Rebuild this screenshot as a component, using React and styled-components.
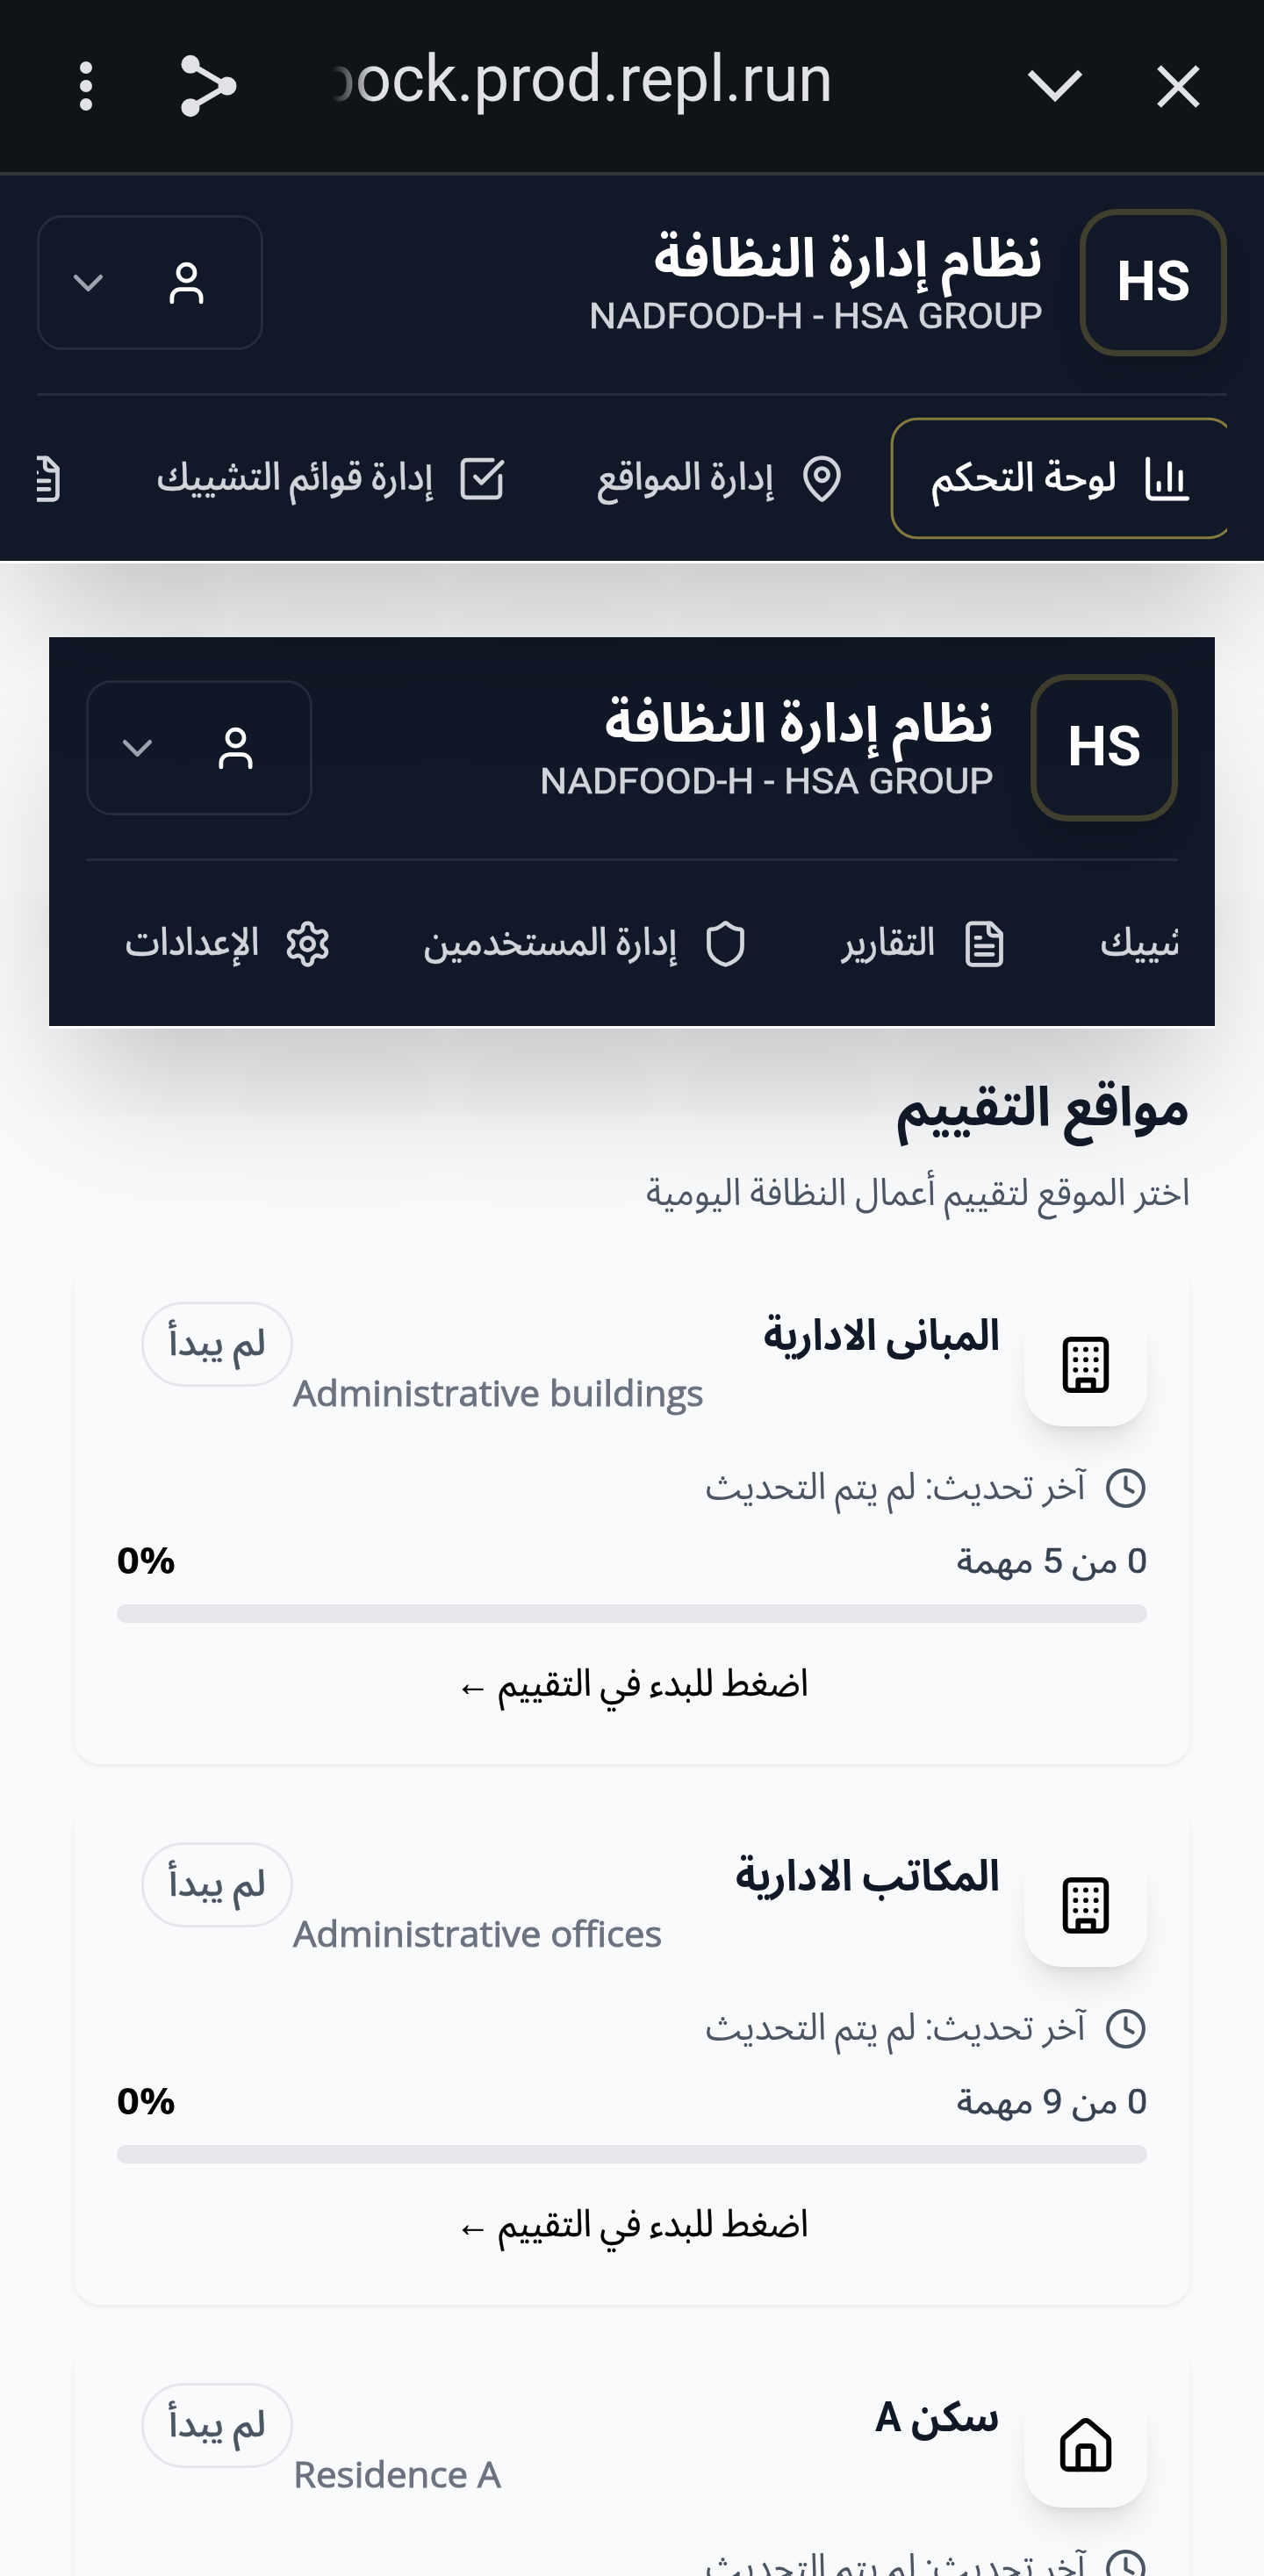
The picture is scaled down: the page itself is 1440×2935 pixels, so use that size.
import React, { useLayoutEffect, useRef, useState } from 'react';
import styled, { createGlobalStyle } from 'styled-components';

const GlobalStyle = createGlobalStyle`
  *, *::before, *::after { box-sizing: border-box; }
  body {
    margin: 0;
    background: #f9fafc;
    font-family: Roboto, "Noto Sans Arabic", "Noto Sans", sans-serif;
  }
  h1, h2, h3, p { margin: 0; }
`;

/* ---------- text that keeps a set measure ---------- */

const FitBox = styled.span`
  display: block;
  flex: none;
  direction: ${(p) => (p.$ltr ? 'ltr' : 'rtl')};
  width: ${(p) => p.$width}px;
  height: ${(p) => p.$line}px;
  line-height: ${(p) => p.$line}px;
  ${(p) => p.$humanist && 'font-family: "Open Sans", "Noto Sans", sans-serif;'}
  font-size: ${(p) => p.$size}px;
  font-weight: ${(p) => p.$weight || 400};
  -webkit-text-stroke: ${(p) => p.$stroke || 0}px currentColor;
  color: ${(p) => p.$color || 'inherit'};
  white-space: nowrap;
`;

const FitInner = styled.span`
  display: inline-block;
  transform-origin: ${(p) => (p.$ltr ? 'left' : 'right')} center;
`;

function Fit({ width, line, size, weight, stroke, color, ltr, humanist, children }) {
  const ref = useRef(null);
  const [scale, setScale] = useState(1);
  useLayoutEffect(() => {
    const natural = ref.current.offsetWidth;
    if (natural) setScale(width / natural);
  }, [width, size, children]);
  return (
    <FitBox
      $width={width}
      $line={line}
      $size={size}
      $weight={weight}
      $stroke={stroke}
      $color={color}
      $ltr={ltr}
      $humanist={humanist}
    >
      <FitInner ref={ref} $ltr={ltr} style={{ transform: `scaleX(${scale})` }}>
        {children}
      </FitInner>
    </FitBox>
  );
}

/* ---------- icons ---------- */

const Svg = styled.svg`
  display: block;
  flex: none;
  fill: none;
  stroke: currentColor;
  stroke-width: 2;
  stroke-linecap: round;
  stroke-linejoin: round;
`;

const icons = {
  chart: ['M3 3v16a2 2 0 0 0 2 2h16', 'M18 17V9', 'M13 17V5', 'M8 17v-3'],
  pin: [
    'M20 10c0 4.993-5.539 10.193-7.399 11.799a1 1 0 0 1-1.202 0C9.539 20.193 4 14.993 4 10a8 8 0 0 1 16 0',
    'M15 10a3 3 0 1 1-6 0a3 3 0 1 1 6 0',
  ],
  check: [
    'M21 10.656V19a2 2 0 0 1-2 2H5a2 2 0 0 1-2-2V5a2 2 0 0 1 2-2h12.344',
    'm9 11 3 3L22 4',
  ],
  file: [
    'M15 2H6a2 2 0 0 0-2 2v16a2 2 0 0 0 2 2h12a2 2 0 0 0 2-2V7Z',
    'M14 2v4a2 2 0 0 0 2 2h4',
    'M10 9H8',
    'M16 13H8',
    'M16 17H8',
  ],
  shield: [
    'M20 13c0 5-3.5 7.5-7.66 8.95a1 1 0 0 1-.67-.01C7.5 20.5 4 18 4 13V6a1 1 0 0 1 1-1c2 0 4.5-1.2 6.24-2.72a1.17 1.17 0 0 1 1.52 0C14.51 3.81 17 5 19 5a1 1 0 0 1 1 1z',
  ],
  settings: [
    'M12.22 2h-.44a2 2 0 0 0-2 2v.18a2 2 0 0 1-1 1.73l-.43.25a2 2 0 0 1-2 0l-.15-.08a2 2 0 0 0-2.73.73l-.22.38a2 2 0 0 0 .73 2.73l.15.1a2 2 0 0 1 1 1.72v.51a2 2 0 0 1-1 1.74l-.15.09a2 2 0 0 0-.73 2.73l.22.38a2 2 0 0 0 2.73.73l.15-.08a2 2 0 0 1 2 0l.43.25a2 2 0 0 1 1 1.73V20a2 2 0 0 0 2 2h.44a2 2 0 0 0 2-2v-.18a2 2 0 0 1 1-1.73l.43-.25a2 2 0 0 1 2 0l.15.08a2 2 0 0 0 2.73-.73l.22-.39a2 2 0 0 0-.73-2.73l-.15-.08a2 2 0 0 1-1-1.74v-.5a2 2 0 0 1 1-1.74l.15-.09a2 2 0 0 0 .73-2.73l-.22-.38a2 2 0 0 0-2.73-.73l-.15.08a2 2 0 0 1-2 0l-.43-.25a2 2 0 0 1-1-1.73V4a2 2 0 0 0-2-2z',
    'M15 12a3 3 0 1 1-6 0a3 3 0 1 1 6 0',
  ],
  user: ['M19 21v-2a4 4 0 0 0-4-4H9a4 4 0 0 0-4 4v2', 'M16 7a4 4 0 1 1-8 0a4 4 0 1 1 8 0'],
  down: ['m6 9 6 6 6-6'],
  clock: ['M22 12a10 10 0 1 1-20 0a10 10 0 1 1 20 0', 'M12 6v6l4 2'],
  building: [
    'M6 2h12a2 2 0 0 1 2 2v16a2 2 0 0 1-2 2H6a2 2 0 0 1-2-2V4a2 2 0 0 1 2-2z',
    'M9 22v-4h6v4',
    'M8 6h.01',
    'M12 6h.01',
    'M16 6h.01',
    'M8 10h.01',
    'M12 10h.01',
    'M16 10h.01',
    'M8 14h.01',
    'M12 14h.01',
    'M16 14h.01',
  ],
  house: [
    'M15 21v-8a1 1 0 0 0-1-1h-4a1 1 0 0 0-1 1v8',
    'M3 10a2 2 0 0 1 .709-1.528l7-5.999a2 2 0 0 1 2.582 0l7 5.999A2 2 0 0 1 21 10v9a2 2 0 0 1-2 2H5a2 2 0 0 1-2-2z',
  ],
};

function Icon({ name, size = 57 }) {
  return (
    <Svg width={size} height={size} viewBox="0 0 24 24">
      {icons[name].map((d) => (
        <path key={d} d={d} />
      ))}
    </Svg>
  );
}

/* ---------- browser bar ---------- */

const BrowserBar = styled.div`
  direction: ltr;
  display: flex;
  align-items: center;
  height: 200px;
  padding: 0 69px 0 88px;
  background: #101318;
  border-bottom: 4px solid #303338;
  color: #e1e2e8;
`;

const BarGlyph = styled.svg`
  display: block;
  flex: none;
  margin-left: ${(p) => p.$gap || 0}px;
  stroke: currentColor;
  fill: none;
`;

const Address = styled.div`
  display: flex;
  justify-content: flex-end;
  width: 571px;
  margin: 0 auto 16px 106px;
  overflow: hidden;
  mask-image: linear-gradient(to right, transparent 0, #000 48px);
`;

function Browser() {
  return (
    <BrowserBar>
      <BarGlyph width="20" height="60" viewBox="0 0 20 60">
        <g fill="currentColor" stroke="none">
          <circle cx="10" cy="9" r="7" />
          <circle cx="10" cy="30" r="7" />
          <circle cx="10" cy="51" r="7" />
        </g>
      </BarGlyph>
      <BarGlyph $gap={96} width="68" height="76" viewBox="0 0 68 76">
        <path d="M13 13.3 55 38 13 62.7" strokeWidth="6.6" />
        <g fill="currentColor" stroke="none">
          <circle cx="13" cy="13.3" r="10.5" />
          <circle cx="55" cy="38" r="10.5" />
          <circle cx="13" cy="62.7" r="10.5" />
        </g>
      </BarGlyph>
      <Address>
        <Fit width={585} line={90} size={74} ltr>
          bock.prod.repl.run
        </Fit>
      </Address>
      <BarGlyph width="68" height="40" viewBox="0 0 68 40">
        <path d="M5.4 4.4 34 33 62.6 4.4" strokeWidth="7.4" />
      </BarGlyph>
      <BarGlyph $gap={78} width="57" height="57" viewBox="0 0 57 57">
        <path d="M6.5 6.5 50.5 50.5M50.5 6.5 6.5 50.5" strokeWidth="6.6" />
      </BarGlyph>
    </BrowserBar>
  );
}

/* ---------- application header ---------- */

const HeaderBox = styled.header`
  position: relative;
  z-index: ${(p) => (p.$inset ? 1 : 2)};
  margin: ${(p) => (p.$inset ? '84px 56px 0' : '0')};
  padding: ${(p) => (p.$inset ? 42 : 38)}px 42px 0;
  background: #111827;
  border-bottom: 3px solid #fff;
  box-shadow: 0 84px 168px -34px rgba(0, 0, 0, 0.25);
`;

const Brand = styled.div`
  display: flex;
  align-items: center;
  height: 213px;
  padding-bottom: 42px;
  border-bottom: 3px solid #232c3b;
`;

const Logo = styled.div`
  display: flex;
  align-items: center;
  justify-content: center;
  width: 168px;
  height: 168px;
  padding-bottom: 3px;
  border: 7px solid #403e2d;
  border-radius: 42px;
  color: #fff;
  box-shadow: 0 26px 39px -8px rgba(0, 0, 0, 0.1), 0 10px 16px -10px rgba(0, 0, 0, 0.1);
`;

const BrandText = styled.div`
  display: flex;
  flex-direction: column;
  gap: 2px;
  margin: 0 42px 0 auto;
`;

const BrandSub = styled.div`
  display: flex;
`;

const UserButton = styled.div`
  display: flex;
  align-items: center;
  gap: 55px;
  height: 154px;
  padding: 0 56px 0 27px;
  border: 3px solid #232c3b;
  border-radius: 29px;
  color: #fff;
`;

const Muted = styled.span`
  color: #9ca3af;
`;

const Nav = styled.nav`
  display: flex;
  align-items: center;
  justify-content: ${(p) => (p.$end ? 'flex-end' : 'flex-start')};
  gap: 14px;
  height: 188px;
  overflow: hidden;
`;

const NavItem = styled.div`
  display: flex;
  flex: none;
  align-items: center;
  gap: 27px;
  height: 132px;
  padding: 0 42px;
  border: 3px solid ${(p) => (p.$active ? '#857a3e' : 'transparent')};
  border-radius: 29px;
  color: ${(p) => (p.$active ? '#fff' : '#d1d5db')};
  transform: ${(p) => (p.$active ? 'scale(1.05)' : 'none')};
`;

const NavLabel = styled.span`
  padding-bottom: 4px;
`;

const navItems = [
  { icon: 'chart', label: 'لوحة التحكم', width: 200 },
  { icon: 'pin', label: 'إدارة المواقع', width: 200 },
  { icon: 'check', label: 'إدارة قوائم التشييك', width: 314 },
  { icon: 'file', label: 'التقارير', width: 107 },
  { icon: 'shield', label: 'إدارة المستخدمين', width: 288 },
  { icon: 'settings', label: 'الإعدادات', width: 152 },
];

function Header({ inset, items, active }) {
  return (
    <HeaderBox $inset={inset}>
      <Brand>
        <Logo>
          <Fit width={84} line={74} size={63} weight={700} ltr>
            HS
          </Fit>
        </Logo>
        <BrandText>
          <Fit width={443} line={74} size={62} weight={700} color="#fff">
            نظام إدارة النظافة
          </Fit>
          <BrandSub>
            <Fit width={517} line={54} size={41.5} stroke={0.7} color="#d1d5db" ltr>
              NADFOOD-H - HSA GROUP
            </Fit>
          </BrandSub>
        </BrandText>
        <UserButton>
          <Icon name="user" />
          <Muted>
            <Icon name="down" />
          </Muted>
        </UserButton>
      </Brand>
      <Nav $end={inset}>
        {items.map((item) => (
          <NavItem key={item.icon} $active={item.icon === active}>
            <Icon name={item.icon} />
            <NavLabel>
              <Fit width={item.width} line={72} size={44} weight={500} stroke={0.4}>
                {item.label}
              </Fit>
            </NavLabel>
          </NavItem>
        ))}
      </Nav>
    </HeaderBox>
  );
}

/* ---------- locations ---------- */

const Page = styled.div`
  direction: rtl;
  height: 2735px;
  overflow: hidden;
  background: #f9fafc;
`;

const Intro = styled.section`
  display: flex;
  flex-direction: column;
  gap: 27px;
  position: relative;
  z-index: 2;
  padding: 49px 84px 48px;
`;

const Cards = styled.section`
  display: flex;
  flex-direction: column;
  gap: 42px;
  position: relative;
  z-index: 2;
  padding: 0 84px;
`;

const Card = styled.article`
  flex: none;
  height: 574px;
  padding: 47px 49px 0;
  background: #f9fafc;
  border-radius: 31px;
  box-shadow: 0 3px 6px rgba(0, 0, 0, 0.06);
`;

const CardHead = styled.div`
  display: flex;
  align-items: flex-start;
  height: 142px;
`;

const Tile = styled.div`
  display: flex;
  align-items: center;
  justify-content: center;
  width: 140px;
  height: 140px;
  margin-top: 2px;
  border-radius: 42px;
  color: #000;
  background: #f9fafc;
  box-shadow: 0 26px 39px -8px rgba(0, 0, 0, 0.1), 0 10px 16px -10px rgba(0, 0, 0, 0.1);
`;

const Names = styled.div`
  display: flex;
  flex: 1;
  flex-direction: column;
  gap: 8px;
  padding: 6px 28px 0 0;
`;

const EnglishName = styled.div`
  display: flex;
  justify-content: flex-end;
`;

const Badge = styled.div`
  display: flex;
  align-items: center;
  justify-content: center;
  width: 173px;
  height: 97px;
  margin-left: 28px;
  padding-bottom: 4px;
  border: 3px solid #e5e7eb;
  border-radius: 49px;
  color: #4b5563;
`;

const Updated = styled.div`
  display: flex;
  gap: 21px;
  height: 49px;
  margin-top: 46px;
  color: #4b5563;
`;

const Tasks = styled.div`
  display: flex;
  justify-content: space-between;
  height: 52px;
  margin-top: 33px;
`;

const Track = styled.div`
  height: 21px;
  margin-top: 23px;
  border-radius: 10.5px;
  background: #e5e7eb;
`;

const Action = styled.div`
  display: flex;
  justify-content: center;
  margin-top: 38px;
  color: #000;
`;

const locations = [
  { icon: 'building', name: 'المبانى الادارية', w: 269, en: 'Administrative buildings', ew: 468, total: 5 },
  { icon: 'building', name: 'المكاتب الادارية', w: 301, en: 'Administrative offices', ew: 420, total: 9 },
  { icon: 'house', name: 'سكن A', w: 142, en: 'Residence A', ew: 237, total: 7 },
];

function LocationCard({ item }) {
  return (
    <Card>
      <CardHead>
        <Tile>
          <Icon name={item.icon} size={70} />
        </Tile>
        <Names>
          <Fit width={item.w} line={66} size={49} weight={700} color="#111827">
            {item.name}
          </Fit>
          <EnglishName>
            <Fit width={item.ew} line={46} size={41} stroke={1} color="#6b7280" ltr humanist>
              {item.en}
            </Fit>
          </EnglishName>
        </Names>
        <Badge>
          <Fit width={111} line={70} size={42} weight={500} stroke={0.4}>
            لم يبدأ
          </Fit>
        </Badge>
      </CardHead>
      <Updated>
        <Icon name="clock" size={49} />
        <Fit width={433} line={45} size={43}>
          آخر تحديث: لم يتم التحديث
        </Fit>
      </Updated>
      <Tasks>
        <Fit width={217} line={52} size={38} stroke={0.6} color="#374151">
          {`0 من ${item.total} مهمة`}
        </Fit>
        <Fit width={67} line={47} size={42} weight={700} color="#000" ltr humanist>
          0%
        </Fit>
      </Tasks>
      <Track />
      <Action>
        <Fit width={402} line={60} size={43} stroke={0.4}>
          اضغط للبدء في التقييم ←
        </Fit>
      </Action>
    </Card>
  );
}

export default function App() {
  return (
    <>
      <GlobalStyle />
      <Browser />
      <Page>
        <Header items={navItems.slice(0, 4)} active="chart" />
        <Header inset items={navItems.slice(2)} />
        <Intro>
          <Fit width={334} line={80} size={62} weight={700} color="#111827">
            مواقع التقييم
          </Fit>
          <Fit width={620} line={60} size={43} color="#4b5563">
            اختر الموقع لتقييم أعمال النظافة اليومية
          </Fit>
        </Intro>
        <Cards>
          {locations.map((item) => (
            <LocationCard key={item.en} item={item} />
          ))}
        </Cards>
      </Page>
    </>
  );
}
